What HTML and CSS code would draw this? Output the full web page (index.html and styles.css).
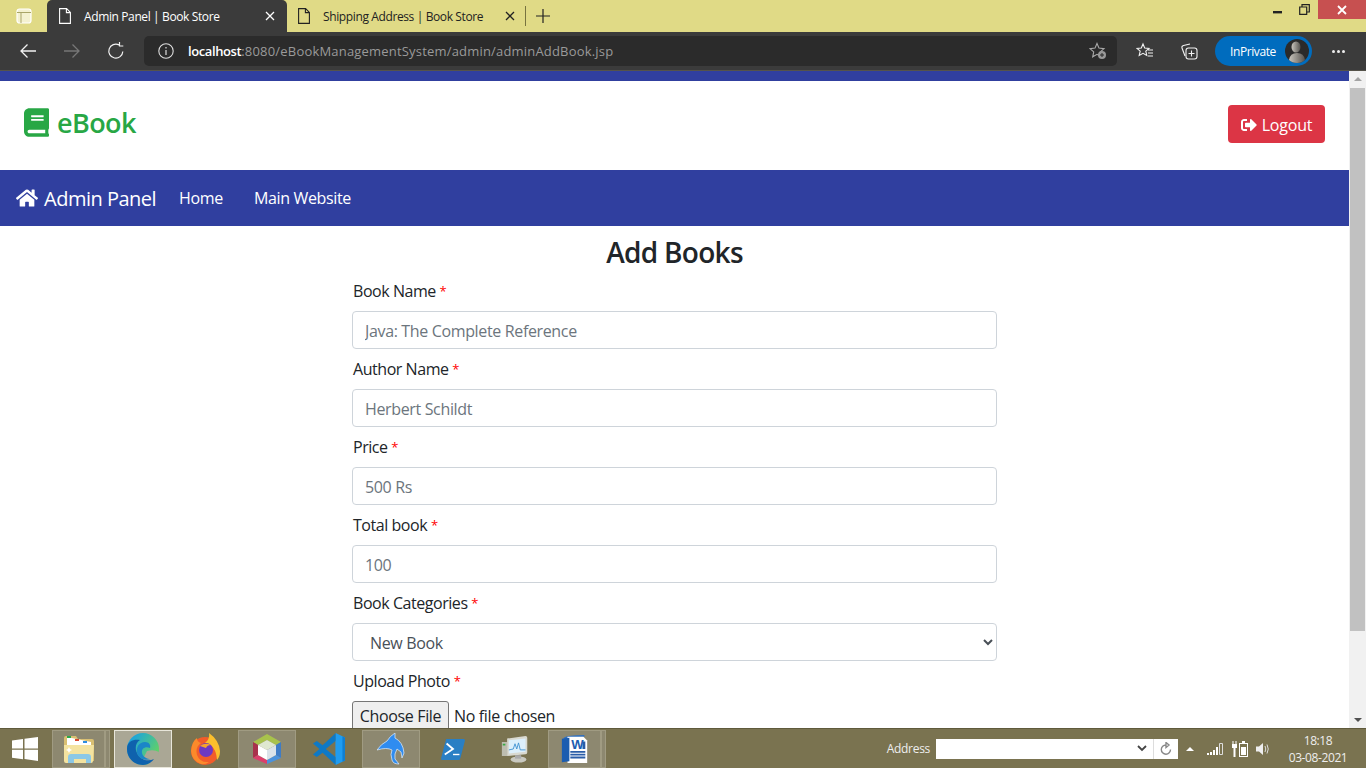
FILE: index.html
```html
<!DOCTYPE html>
<html lang="en">
<head>
    <meta charset="UTF-8">
    <meta name="viewport" content="width=device-width, initial-scale=1.0">
    <title>Admin Panel | Book Store</title>
    <link rel="stylesheet" href="styles.css">
</head>
<body>
    <div class="tabstrip">
        <div class="tabs-btn">
            <svg width="16" height="16" viewBox="0 0 16 16"><rect x="1" y="1" width="14" height="14" rx="2.5" fill="#f4f1d0" stroke="#fff" stroke-width="1.2"/><path d="M1 4.5h14M5 4.5V15" stroke="#a9a568" fill="none"/></svg>
        </div>
        <div class="tab tab-active">
            <svg class="tab-doc" width="12" height="16" viewBox="0 0 12 16"><path d="M.6.6h7l3.8 3.8v11H.6zM7.4.6v4h4" fill="none" stroke="#fff" stroke-width="1.1"/></svg>
            <span class="tab-title">Admin Panel | Book Store</span>
            <svg class="tab-x" width="10" height="10" viewBox="0 0 10 10"><path d="M1 1l8 8M9 1l-8 8" stroke="#fff" stroke-width="1.3"/></svg>
        </div>
        <div class="tab">
            <svg class="tab-doc" width="12" height="16" viewBox="0 0 12 16"><path d="M.6.6h7l3.8 3.8v11H.6zM7.4.6v4h4" fill="none" stroke="#222" stroke-width="1.1"/></svg>
            <span class="tab-title">Shipping Address | Book Store</span>
            <svg class="tab-x" width="10" height="10" viewBox="0 0 10 10"><path d="M1 1l8 8M9 1l-8 8" stroke="#222" stroke-width="1.3"/></svg>
        </div>
        <div class="tab-sep"></div>
        <svg class="tab-plus" width="14" height="14" viewBox="0 0 14 14"><path d="M7 0v14M0 7h14" stroke="#222" stroke-width="1.2"/></svg>
        <div class="win-btns">
            <span class="win-btn"><svg width="10" height="10" viewBox="0 0 10 10"><rect y="6" width="9" height="2.4" fill="#222"/></svg></span>
            <span class="win-btn"><svg width="11" height="11" viewBox="0 0 11 11"><path d="M.7 3h7v7.3h-7zM3 3V.7h7.3v7.3H8" fill="none" stroke="#222" stroke-width="1.2"/></svg></span>
            <span class="win-close"><svg width="10" height="10" viewBox="0 0 10 10"><path d="M1 1l8 8M9 1l-8 8" stroke="#fff" stroke-width="1.8"/></svg></span>
        </div>
    </div>

    <div class="toolbar">
        <svg class="tool" width="18" height="16" viewBox="0 0 18 16"><path d="M17 8H2M8.5 1.5L2 8l6.5 6.5" fill="none" stroke="#f2f2f2" stroke-width="1.3"/></svg>
        <svg class="tool" width="18" height="16" viewBox="0 0 18 16"><path d="M1 8h15M9.5 1.5L16 8l-6.5 6.5" fill="none" stroke="#777" stroke-width="1.3"/></svg>
        <svg class="tool" width="18" height="18" viewBox="0 0 18 18"><path d="M15.8 9.5A7 7 0 1 1 12 2.9M12.5 0v4h3.8" fill="none" stroke="#f2f2f2" stroke-width="1.2"/></svg>
        <div class="urlbar">
            <svg width="16" height="16" viewBox="0 0 16 16"><circle cx="8" cy="8" r="7.2" fill="none" stroke="#ddd" stroke-width="1.1"/><path d="M8 7v5M8 4v1.5" stroke="#ddd" stroke-width="1.2"/></svg>
            <span class="url"><b>localhost</b>:8080/eBookManagementSystem/admin/adminAddBook.jsp</span>
            <svg class="url-star" width="18" height="18" viewBox="0 0 18 18"><path d="M8 1.5l2 4.6 5 .5-3.7 3.3 1 4.9L8 12.3l-4.3 2.5 1-4.9L1 6.6l5-.5z" fill="none" stroke="#aaa" stroke-width="1.1"/><circle cx="13" cy="13" r="4" fill="#999"/><path d="M13 11v4M11 13h4" stroke="#2b2b2b"/></svg>
        </div>
        <svg class="tool-fav" width="18" height="18" viewBox="0 0 18 18"><path d="M7 2l1.700 4 4.300.4-3.200 2.800 1 4.300L7 11.300l-3.800 2.200 1-4.300L1 6.400l4.300-.4zM12 8h5M12 11h5M12 14h5" fill="none" stroke="#f2f2f2" stroke-width="1.1"/></svg>
        <svg class="tool-coll" width="18" height="18" viewBox="0 0 18 18"><path d="M5 14L2 6q-.5-2 1.500-2.500L10 2" fill="none" stroke="#f2f2f2" stroke-width="1.1"/><rect x="6" y="6" width="11" height="11" rx="2.5" fill="none" stroke="#f2f2f2" stroke-width="1.1"/><path d="M11.500 8.500v6M8.500 11.500h6" stroke="#f2f2f2" stroke-width="1.1"/></svg>
        <div class="inprivate">
            <span>InPrivate</span>
            <svg class="avatar" width="24" height="24" viewBox="0 0 24 24"><defs><linearGradient id="face" x1="0" y1="0" x2="1" y2="0"><stop offset="0" stop-color="#c9c5bd"/><stop offset="1" stop-color="#55524e"/></linearGradient></defs><circle cx="12" cy="12" r="12" fill="#2a2a2a"/><ellipse cx="11" cy="8" rx="4.5" ry="5.5" fill="url(#face)"/><path d="M4 21q1-7 8-7t8 7q-3 3-8 3t-8-3z" fill="url(#face)"/></svg>
        </div>
        <div class="dots"><i></i><i></i><i></i></div>
    </div>

    <div class="viewport">
        <div class="page">
            <div class="top-strip"></div>
            <header class="site-head">
                <div class="brand">
                    <svg width="25" height="29" viewBox="0 0 448 512"><path fill="#28a745" d="M448 360V24c0-13.300-10.700-24-24-24H96C43 0 0 43 0 96v320c0 53 43 96 96 96h328c13.300 0 24-10.700 24-24v-16c0-7.500-3.500-14.300-8.900-18.700-4.200-15.400-4.200-59.300 0-74.700 5.400-4.300 8.900-11.100 8.900-18.600zM128 134c0-3.300 2.700-6 6-6h212c3.300 0 6 2.700 6 6v20c0 3.300-2.700 6-6 6H134c-3.300 0-6-2.700-6-6v-20zm0 64c0-3.300 2.700-6 6-6h212c3.300 0 6 2.700 6 6v20c0 3.300-2.700 6-6 6H134c-3.300 0-6-2.700-6-6v-20zm253.400 250H96c-17.700 0-32-14.300-32-32 0-17.600 14.400-32 32-32h285.400c-1.900 17.100-1.900 46.900 0 64z"/></svg>
                    <span>eBook</span>
                </div>
                <a class="logout">
                    <svg width="16" height="16" viewBox="0 0 512 512"><path fill="#fff" d="M497 273L329 441c-15 15-41 4.500-41-17v-96H152c-13.300 0-24-10.700-24-24v-96c0-13.300 10.700-24 24-24h136V88c0-21.400 25.900-32 41-17l168 168c9.300 9.400 9.300 24.600 0 34zM192 436v-40c0-6.600-5.400-12-12-12H96c-17.700 0-32-14.300-32-32V160c0-17.700 14.300-32 32-32h84c6.600 0 12-5.400 12-12V76c0-6.600-5.400-12-12-12H96c-53 0-96 43-96 96v192c0 53 43 96 96 96h84c6.600 0 12-5.400 12-12z"/></svg>
                    Logout
                </a>
            </header>
            <nav class="navbar">
                <a class="nav-brand">
                    <svg width="22" height="20" viewBox="0 0 576 512"><path fill="#fff" d="M280.370 148.260L96 300.110V464a16 16 0 0 0 16 16l112.060-.29a16 16 0 0 0 15.920-16V368a16 16 0 0 1 16-16h64a16 16 0 0 1 16 16v95.640a16 16 0 0 0 16 16.050L464 480a16 16 0 0 0 16-16V300L295.670 148.260a12.190 12.190 0 0 0-15.300 0zM571.600 251.470L488 182.560V44.050a12 12 0 0 0-12-12h-56a12 12 0 0 0-12 12v72.610L318.470 43a48 48 0 0 0-61 0L4.340 251.470a12 12 0 0 0-1.600 16.900l25.500 31A12 12 0 0 0 45.150 301l235.220-193.740a12.190 12.190 0 0 1 15.300 0L530.900 301a12 12 0 0 0 16.900-1.600l25.500-31a12 12 0 0 0-1.700-16.930z"/></svg>
                    Admin Panel
                </a>
                <a class="nav-link">Home</a>
                <a class="nav-link">Main Website</a>
            </nav>
            <main class="form-wrap">
                <h3 class="form-title">Add Books</h3>
                <form class="book-form">
                    <label class="field-label">Book Name <em>*</em></label>
                    <input class="field" type="text" placeholder="Java: The Complete Reference">
                    <label class="field-label">Author Name <em>*</em></label>
                    <input class="field" type="text" placeholder="Herbert Schildt">
                    <label class="field-label">Price <em>*</em></label>
                    <input class="field" type="text" placeholder="500 Rs">
                    <label class="field-label">Total book <em>*</em></label>
                    <input class="field" type="text" placeholder="100">
                    <label class="field-label">Book Categories <em>*</em></label>
                    <select class="field field-select"><option>New Book</option></select>
                    <label class="field-label">Upload Photo <em>*</em></label>
                    <input class="file-input" type="file">
                </form>
            </main>
        </div>
        <div class="scrollbar">
            <span class="arrow-up"></span>
            <span class="thumb"></span>
            <span class="arrow-down"></span>
        </div>
    </div>

    <footer class="taskbar">
        <svg class="start" width="26" height="24" viewBox="0 0 26 24"><path fill="#fff" d="M0 3.500l11-1.500v9.500H0zM12.500 1.800L26 0v11.500H12.500zM0 12.800h11v9.500L0 20.800zM12.500 12.800H26V24l-13.500-1.900z"/></svg>
        <div class="task task-on task-first">
            <svg width="30" height="28" viewBox="0 0 30 28"><path d="M0 3q0-2 2-2h10l2 3h14q2 0 2 2v20H2q-2 0-2-2z" fill="#d9bf72"/><path d="M3 2l24 5v6H3z" fill="#fff"/><rect x="3" y="1" width="4" height="2" fill="#2aa84a"/><rect x="11" y="4" width="4" height="2" fill="#d8492e"/><rect x="19" y="6" width="4" height="2" fill="#2d8ce0"/><path d="M0 10h30l-1 16q0 2-2 2H2q-2 0-2-2z" fill="#f4e3a0"/><path d="M4 28v-6q0-3 3-3h17q3 0 3 3v6h-5v-4H10v4z" fill="#8cc8e6"/><path d="M5 12l1 2 2 1-2 1-1 2-1-2-2-1 2-1z" fill="#fff"/></svg>
        </div>
        <span class="task-sliver"></span>
        <div class="task task-active">
            <svg width="32" height="32" viewBox="0 0 32 32"><defs><linearGradient id="edge" x1="0" y1="0" x2="1" y2=".7"><stop offset=".2" stop-color="#1fa6d8"/><stop offset=".9" stop-color="#5fd06a"/></linearGradient></defs><circle cx="16" cy="16" r="16" fill="url(#edge)"/><path d="M20 18q7-2 12 1-1 9-9 12l-8-3z" fill="#aaa795"/><path d="M0 16C0 7 8 6 13 7 8 10 8 16 10 20c3 7 11 9 17 6-3 4-7 6-11 6C7 32 0 25 0 16z" fill="#0f62ad"/><path d="M10 20c-1-6 2-11 8-11 4 0 6 3 5 6-4-2-9 0-8 5 1 4 5 6 9 6-6 2-12 0-14-6z" fill="#1b86c8"/></svg>
        </div>
        <div class="task">
            <svg width="32" height="34" viewBox="0 0 32 34"><circle cx="16" cy="19" r="14" fill="#f25c2a"/><path d="M20 1q10 7 11 18 0 6-3 9-1-15-12-17 5-4 4-10z" fill="#fbbf2d"/><path d="M2 19Q3 9 8 6q0 4 4 5-6 4-4 12 3 8 12 7-4 3-8 2Q3 29 2 19z" fill="#fb8a2b"/><circle cx="17" cy="18" r="7" fill="#6e39c2"/><path d="M11 14q5-4 11-1-4 0-5 3z" fill="#f6a42c"/></svg>
        </div>
        <div class="task task-on">
            <svg width="30" height="32" viewBox="0 0 30 32"><path d="M15 1l14 8-5 3-9-5-9 5-5-3z" fill="#a8c24c"/><path d="M1 9l5 3v10l-5 3z" fill="#a8324c"/><path d="M29 9l-5 3v10l5 3z" fill="#3f7cc6"/><path d="M1 25l5-3 9 5v4z" fill="#dc3f6c"/><path d="M29 25l-5-3-9 5v4z" fill="#4b92dc"/><path d="M15 7l9 5-9 5-9-5z" fill="#dfe8d0"/><path d="M6 12l9 5v10l-9-5z" fill="#fff"/><path d="M24 12l-9 5v10l9-5z" fill="#dbe3ea"/></svg>
        </div>
        <div class="task">
            <svg width="32" height="32" viewBox="0 0 100 100"><path d="M0 33l12-8 18 13L71 0v24L40 50l31 26v24L30 62 12 75 0 67l20-17z" fill="#0d79c7"/><path d="M71 0l29 14v72l-29 14V76l-1-1V25l1-1z" fill="#1f9cf0"/><path d="M92 10l8 4v72l-8 4z" fill="#0f7fd2"/></svg>
        </div>
        <div class="task task-on">
            <svg width="28" height="32" viewBox="0 0 28 32"><path d="M0 17Q4 11 10 8 13 3 18 0L18 5Q26 9 27 20L25 25 24 19 20 16Q17 21 18 26L22 31Q16 31 15 27 13 21 15 17 10 14 0 17z" fill="#2f8cf0" stroke="#d6e4f4" stroke-width=".8"/></svg>
        </div>
        <div class="task">
            <svg width="26" height="22" viewBox="0 0 26 24"><path d="M6 1h19q1 0 1 2l-5 19q-.5 2-2 2H1q-1 0-1-2L5 3q0-2 1-2z" fill="#2a7fc4"/><path d="M6 6l7 6-9 6" fill="none" stroke="#fff" stroke-width="2"/><path d="M13 18h7" stroke="#fff" stroke-width="1.5"/></svg>
        </div>
        <div class="task">
            <svg width="30" height="28" viewBox="0 0 32 32"><rect x="1" y="8" width="6" height="16" fill="#bdbdb0"/><rect x="2" y="10" width="3" height="2" fill="#3caa44"/><path d="M7 4l21-3q2 0 2 2v17q0 2-2 2L7 24z" fill="#d9d9d0"/><path d="M9 6l19-2v15L9 21z" fill="#dceffb"/><path d="M9 17l5-1 2-6 2 6 2-7 2 8 6 0" fill="none" stroke="#3c8fd0"/><ellipse cx="20" cy="28" rx="9" ry="3.5" fill="#c9c9c0"/><rect x="16" y="23" width="7" height="4" fill="#aaa"/></svg>
        </div>
        <div class="task task-on task-last">
            <svg width="30" height="30" viewBox="0 0 32 32"><path d="M4 4q4-3 22-3v2Q10 3 7 6v21l-5 1z" fill="#2f6fc0"/><path d="M8 3h17l4 4v24H8z" fill="#fff"/><path d="M2 5l8-1v25l-8 1z" fill="#1c5db0"/><text class="word-w" x="12" y="16">W</text><path d="M11 19h16M11 22h16M11 25h16" stroke="#2a5da8" stroke-width="2"/><rect x="24" y="8" width="3" height="8" fill="#2a5da8"/></svg>
        </div>
        <span class="task-sliver"></span>

        <div class="tray">
            <span class="addr-label">Address</span>
            <div class="addr-box">
                <svg class="addr-chev" width="10" height="7" viewBox="0 0 10 7"><path d="M1 1l4 4 4-4" fill="none" stroke="#444" stroke-width="1.8"/></svg>
                <span class="addr-go"><svg width="12" height="13" viewBox="0 0 12 13"><path d="M10.500 7.500A4.600 4.600 0 1 1 6 3M6 .5v5l3-2.500z" fill="none" stroke="#888" stroke-width="1.4"/></svg></span>
            </div>
            <span class="tray-up"></span>
            <svg class="tray-signal" width="16" height="12" viewBox="0 0 16 12"><path fill="#fff" d="M0 10h2v2H0zM3 9h2v3H3zM6 7h2v5H6zM9 4h2v8H9z"/><path fill="none" stroke="#ddd" d="M12.500 .5h3v11h-3z"/></svg>
            <svg class="tray-power" width="16" height="16" viewBox="0 0 16 16"><path d="M1 0v3M4 0v3" stroke="#fff"/><path d="M0 3h5v4H3.500v9h-2V7H0z" fill="#fff"/><rect x="7.500" y="2.500" width="8" height="13" fill="none" stroke="#fff"/><rect x="9" y="6" width="5" height="8" fill="#fff"/><rect x="10" y="0" width="3" height="2" fill="#fff"/></svg>
            <svg class="tray-sound" width="14" height="14" viewBox="0 0 14 14"><path d="M0 4.500h3L7 1v12L3 9.500H0z" fill="#eee"/><path d="M9 4q1.500 3 0 6M11 2.500q2.500 4.500 0 9" fill="none" stroke="#ddd"/></svg>
            <div class="clock"><span>18:18</span><span>03-08-2021</span></div>
        </div>
    </footer>
</body>
</html>
```

FILE: styles.css
```css
* { box-sizing: border-box; }
html, body { margin: 0; height: 768px; overflow: hidden; }
body { display: flex; flex-direction: column; width: 1366px; font-family: "Open Sans", "Noto Sans", sans-serif; background: #fff; color: #212529; }

/* browser chrome */
.tabstrip { height: 32px; background: #e0da86; display: flex; align-items: flex-end; flex: none; }
.tabs-btn { width: 47px; height: 32px; display: flex; align-items: center; justify-content: center; }
.tab { width: 240px; height: 32px; display: flex; align-items: center; padding: 0 12px 0 11px; font-size: 12px; color: #222; }
.tab-active { background: #3b3b3b; color: #fff; border-radius: 5px 5px 0 0; padding-left: 12px; }
.tab-doc { flex: none; margin-right: 13px; }
.tab-title { flex: 1; white-space: nowrap; letter-spacing: -.38px; }
.tab-x { flex: none; }
.tab-sep { width: 1px; height: 20px; background: #77733f; margin: 0 0 6px -2px; }
.tab-plus { margin: 0 0 9px 10px; }
.win-btns { margin-left: auto; height: 32px; display: flex; align-items: flex-start; }
.win-btn { width: 26px; height: 19px; display: flex; align-items: center; justify-content: center; }
.win-close { width: 48px; height: 19px; background: #c75050; display: flex; align-items: center; justify-content: center; margin-left: 1px; }

.toolbar { height: 39px; background: #3b3b3b; display: flex; align-items: center; flex: none; border-bottom: 1px solid #55534a; padding-left: 19px; }
.tool { flex: none; margin-right: 26px; }
.urlbar { width: 973px; height: 30px; margin-left: -7px; background: #2b2b2b; border-radius: 5px; display: flex; align-items: center; padding-left: 14px; color: #9a9a9a; font-size: 13px; }
.url { margin-left: 14px; letter-spacing: .19px; white-space: nowrap; }
.url b { color: #fff; font-weight: 600; letter-spacing: -.4px; }
.url-star { margin-left: auto; margin-right: 10px; }
.tool-fav { margin-left: 19px; }
.tool-coll { margin-left: 26px; }
.inprivate { width: 97px; height: 30px; margin-left: 17px; background: #006cbe; border-radius: 15px; display: flex; align-items: center; color: #fff; font-size: 12px; padding-left: 15px; letter-spacing: -.4px; }
.avatar { margin-left: auto; margin-right: 3px; }
.dots { display: flex; gap: 2px; margin-left: 20px; }
.dots i { width: 3px; height: 3px; background: #eee; border-radius: 50%; }

/* page */
.viewport { flex: 1; display: flex; min-height: 0; }
.page { flex: 1; min-width: 0; overflow: hidden; }
.top-strip { height: 10px; background: #303f9f; }
.site-head { height: 89px; display: flex; align-items: center; justify-content: space-between; padding: 0 24px; }
.brand { display: flex; align-items: center; gap: 8px; color: #28a745; font-size: 27px; font-weight: 600; letter-spacing: -.6px; margin-top: -6px; }
.logout { width: 97px; height: 38px; padding-top: 1px; background: #dc3545; color: #fff; border-radius: 4px; display: flex; align-items: center; justify-content: center; gap: 5px; font-size: 16px; letter-spacing: -.2px; margin-top: -3px; }
.navbar { height: 56px; background: #303f9f; color: #fff; display: flex; align-items: center; padding-left: 16px; }
.nav-brand { display: flex; align-items: center; gap: 6px; font-size: 20px; letter-spacing: -.5px; margin-right: 23px; }
.nav-link { font-size: 16px; letter-spacing: -.35px; margin-right: 31px; }
.form-wrap { width: 645px; margin: 0 auto; }
.form-title { margin: 0; height: 53px; text-align: center; font-size: 28px; font-weight: 600; letter-spacing: -.7px; line-height: 53px; }
.book-form { display: flex; flex-direction: column; }
.field-label { display: block; height: 24px; line-height: 24px; margin-bottom: 8px; padding-left: 1px; font-size: 16px; letter-spacing: -.45px; }
.field-label em { color: #f00; font-style: normal; font-size: 13px; vertical-align: 1px; }
.field { height: 38px; margin-bottom: 8px; padding: 7px 12px 5px; border: 1px solid #ced4da; border-radius: 4px; font: 16px "Open Sans", "Noto Sans", sans-serif; letter-spacing: -.35px; color: #495057; background: #fff; }
.field::placeholder { color: #6c757d; opacity: 1; }
.field-select { padding-left: 13px; }
.file-input { height: 30px; font: 16px "Open Sans", "Noto Sans", sans-serif; letter-spacing: -.35px; }
.file-input::file-selector-button { width: 97px; height: 30px; margin-right: 5px; padding: 0; font: inherit; letter-spacing: inherit; background: #efefef; border: 1px solid #767676; border-radius: 3px; color: #212529; }

/* scrollbar */
.scrollbar { width: 17px; flex: none; background: #f1f1f1; position: relative; }
.thumb { display: block; width: 15px; height: 543px; margin: 17px 0 0 1px; background: #c1c1c1; }
.arrow-up, .arrow-down { position: absolute; left: 5px; width: 0; height: 0; border-left: 4px solid transparent; border-right: 4px solid transparent; }
.arrow-up { top: 6px; border-bottom: 4px solid #a3a3a3; }
.arrow-down { bottom: 6px; border-top: 4px solid #505050; }

/* taskbar */
.taskbar { height: 40px; flex: none; background: #7a7350; border-top: 1px solid #5f5a3c; display: flex; align-items: center; gap: 4px; color: #eee; }
.start { margin: 0 10px 0 12px; }
.task { width: 58px; height: 38px; display: flex; align-items: center; justify-content: center; flex: none; border: 1px solid transparent; }
.task-on { background: #8d8870; border: 1px solid #a09b82; }
.task-active { background: #aaa795; border: 1px solid #e8e6da; }
.task-first, .task-last { width: 53px; }
.task-sliver { width: 5px; height: 38px; flex: none; margin-left: -4px; background: #8d8870; border: 1px solid #a09b82; }
.word-w { font: 700 14px "Liberation Sans", sans-serif; fill: #1c5db0; }

.tray { margin-left: auto; padding-right: 8px; display: flex; align-items: center; font-size: 12px; }
.addr-label { margin-right: 6px; letter-spacing: -.3px; }
.addr-box { width: 242px; height: 20px; background: #fff; display: flex; align-items: center; justify-content: flex-end; }
.addr-chev { margin-right: 6px; }
.addr-go { width: 25px; height: 20px; display: flex; align-items: center; justify-content: center; border-left: 1px solid #ddd; }
.tray-up { margin-left: 8px; width: 0; height: 0; border-left: 4px solid transparent; border-right: 4px solid transparent; border-bottom: 4px solid #fff; }
.tray-signal { margin-left: 13px; }
.tray-power { margin-left: 9px; }
.tray-sound { margin-left: 8px; }
.clock { width: 80px; margin-left: 8px; display: flex; flex-direction: column; align-items: center; font-size: 12px; letter-spacing: -.4px; line-height: 17px; }
```
